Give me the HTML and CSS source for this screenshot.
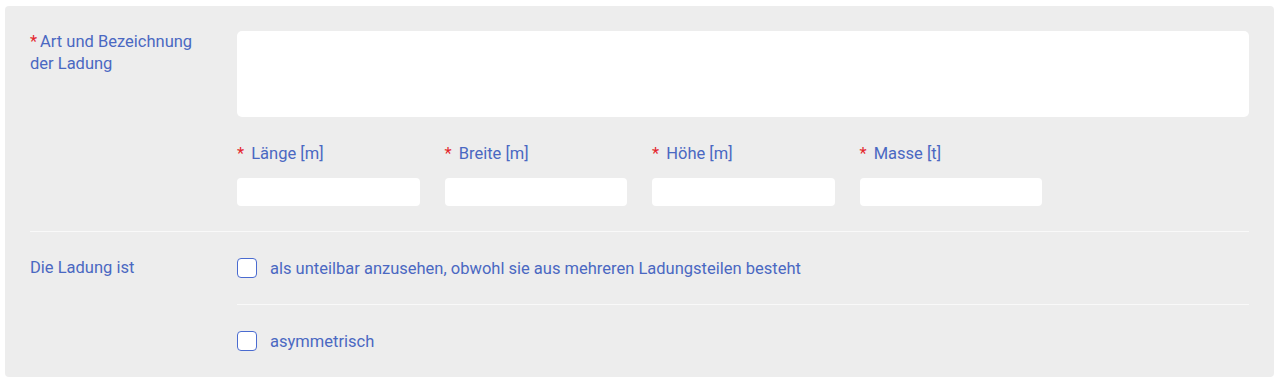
FILE: index.html
```html
<!DOCTYPE html>
<html>
<head>
    <link rel="stylesheet" href="styles.css">
</head>
<body>
    <div class="panel">
        <div class="row">
            <div class="row-label"><span class="req">*</span>Art und Bezeichnung der Ladung</div>
            <div class="row-field">
                <textarea class="area"></textarea>
                <div class="dims">
                    <div class="dim">
                        <label><span class="req">*</span> Länge [m]</label>
                        <input type="text" class="box">
                    </div>
                    <div class="dim">
                        <label><span class="req">*</span> Breite [m]</label>
                        <input type="text" class="box">
                    </div>
                    <div class="dim">
                        <label><span class="req">*</span> Höhe [m]</label>
                        <input type="text" class="box">
                    </div>
                    <div class="dim">
                        <label><span class="req">*</span> Masse [t]</label>
                        <input type="text" class="box">
                    </div>
                </div>
            </div>
        </div>
        <div class="row row-checks">
            <div class="row-label check-label">Die Ladung ist</div>
            <div class="row-field">
                <label class="check"><span class="tick"></span>als unteilbar anzusehen, obwohl sie aus mehreren Ladungsteilen besteht</label>
                <label class="check"><span class="tick"></span>asymmetrisch</label>
            </div>
        </div>
    </div>
</body>
</html>
```

FILE: styles.css
```css
body {
    margin: 0;
    background-color: #ffffff;
    font-family: Roboto, "Noto Sans", sans-serif;
    font-size: 16.5px;
    color: #4a68c2;
}
.panel {
    margin: 6px 7px 9px 5px;
    padding: 25px 25px 0 25px;
    background-color: #ededed;
    border-radius: 4px;
}
.row {
    display: grid;
    grid-template-columns: 207px 1fr;
}
.row-label {
    line-height: 22px;
    padding-right: 30px;
}
.req {
    color: #e4262c;
    margin-right: 3px;
}
.area {
    display: block;
    box-sizing: border-box;
    width: 100%;
    height: 86px;
    border: none;
    border-radius: 5px;
    background-color: #ffffff;
    resize: none;
    margin: 0;
}
.dims {
    display: flex;
    gap: 25px;
    margin-top: 26px;
    padding-bottom: 25px;
}
.dim label {
    display: block;
    line-height: 22px;
    margin-bottom: 13px;
}
.box {
    display: block;
    box-sizing: border-box;
    width: 182.5px;
    height: 28px;
    border: none;
    border-radius: 4px;
    background-color: #ffffff;
    margin: 0;
}
.row-checks {
    border-top: 1px solid #f9f9f9;
}
.check-label {
    padding-top: 25px;
}
.check {
    display: flex;
    align-items: center;
    gap: 13px;
    height: 72px;
    box-sizing: border-box;
}
.check + .check {
    border-top: 1px solid #f9f9f9;
    height: 73px;
}
.tick {
    width: 20px;
    height: 20px;
    box-sizing: border-box;
    border: 1.5px solid #4a6bd0;
    border-radius: 4px;
    background-color: #ffffff;
}
```
